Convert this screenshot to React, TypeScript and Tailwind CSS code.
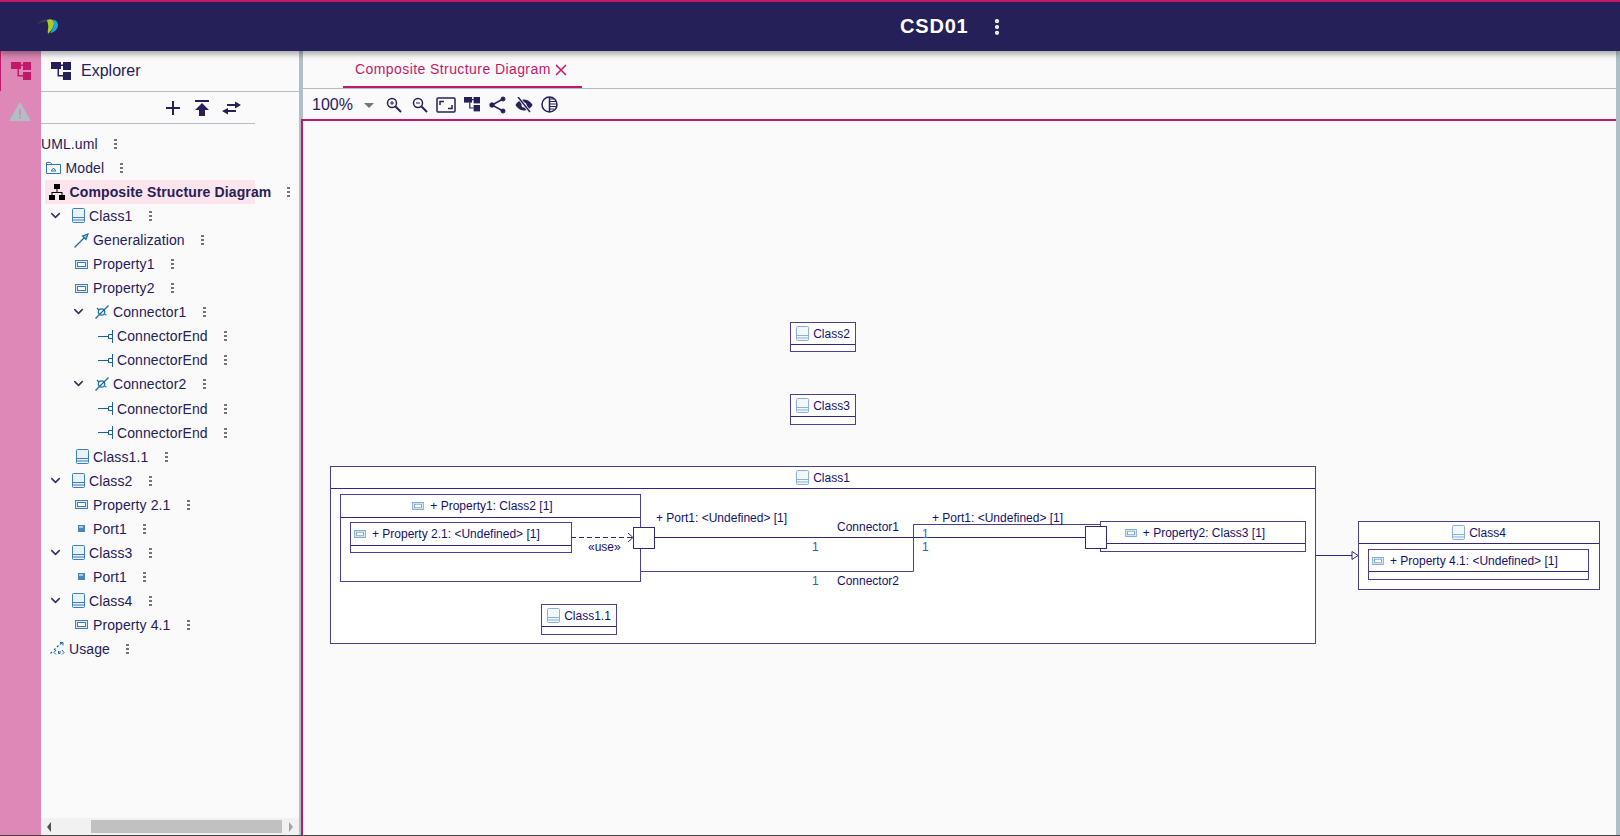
import { ChevronDown, EllipsisVertical } from "lucide-react";
import type { ReactNode } from "react";

const navy = "#262059";

function TreeIcon({ color = navy, size = 20 }: { color?: string; size?: number }) {
  return (
    <svg width={size} height={(size * 18) / 20} viewBox="0 0 20 18" fill={color}>
      <rect x="0" y="0" width="10" height="7" />
      <rect x="12" y="0" width="8" height="8" />
      <rect x="12" y="10" width="8" height="8" />
      <path d="M10 2.500h2V4h-2zM6.500 7H8v6h4v1.500H6.500z" />
    </svg>
  );
}

function ClassIcon({ faded }: { faded?: boolean }) {
  return (
    <svg width="13" height="16" viewBox="0 0 13 16" className={faded ? "opacity-60" : ""}>
      <rect x="0.500" y="0.500" width="12" height="14" rx="1" fill="#eaf2f9" stroke="#3f7fb8" />
      <path d="M1 9.500h11M1 12h11" stroke="#3f7fb8" />
    </svg>
  );
}

function PropertyIcon({ small }: { small?: boolean }) {
  return (
    <svg width={small ? 12 : 13} height={small ? 8 : 9} viewBox="0 0 13 9" className={small ? "opacity-70" : ""}>
      <rect x="0.500" y="0.500" width="12" height="8" fill="#dce9f5" stroke="#3f7fb8" />
      <rect x="2.500" y="2.500" width="8" height="4" fill="#fff" stroke="#3f7fb8" />
    </svg>
  );
}

function PortIcon() {
  return (
    <svg width="7" height="7" viewBox="0 0 7 7">
      <rect width="7" height="7" fill="#4a86ba" />
      <rect x="1" y="1" width="4" height="2" fill="#a9c8e2" />
    </svg>
  );
}

function EndIcon() {
  return (
    <svg width="15" height="13" viewBox="0 0 15 13" fill="none" stroke="#1d5f96">
      <path d="M0 6.500h10M14.500 0v13M10.500 4.500h4v4h-4z" />
    </svg>
  );
}

function ConnectorIcon() {
  return (
    <svg width="14" height="14" viewBox="0 0 14 14" fill="none" stroke="#1d6aa5" strokeWidth="1.200">
      <path d="M0.500 13.500 13.500 0.500" />
      <circle cx="6.500" cy="7" r="3.200" />
      <path d="M2 3l2 2M9.500 9.500l2 .5" />
    </svg>
  );
}

function GeneralizationIcon() {
  return (
    <svg width="15" height="15" viewBox="0 0 15 15" fill="none" stroke="#1d6aa5" strokeWidth="1.200">
      <path d="M0.500 14.500 10 5" />
      <path d="M8.500 3 14 1l-2 5.500z" fill="#9cc2e0" />
    </svg>
  );
}

function FolderIcon() {
  return (
    <svg width="15" height="12" viewBox="0 0 15 12" fill="none" stroke="#2f78b2">
      <path d="M0.500 11.500V0.500h4l1.500 2h8.500v9z" />
      <path d="M0.500 2.500H6M5 9l2.500-3L10 9z" />
    </svg>
  );
}

function DiagramIcon() {
  return (
    <svg width="16" height="16" viewBox="0 0 16 16" fill="#000">
      <rect x="5" y="0" width="6" height="5" />
      <rect x="0" y="11" width="6" height="5" />
      <rect x="10" y="11" width="6" height="5" />
      <path d="M7.500 5h1v3h5v3h-1V9h-9v2h-1V8h5z" />
    </svg>
  );
}

function UsageIcon() {
  return (
    <svg width="15" height="13" viewBox="0 0 15 13" fill="none" stroke="#1d6aa5">
      <path d="M0.500 11.500 2 10M4 8l1.500-1.500M7 5l1.500-1.500M10 2.500 12.500 0.500" strokeWidth="1.200" />
      <path d="M10 0.500h3v3" />
      <path d="M6 8l-2 2.500L6 12.500M12 8l2 2.500-2 2M8.500 9v2.500h1.500V9" />
    </svg>
  );
}

function Dots() {
  return (
    <span className="flex h-[10px] w-[3px] flex-col justify-between">
      <i className="block h-[2px] w-[3px] bg-[#757575]" />
      <i className="block h-[2px] w-[3px] bg-[#757575]" />
      <i className="block h-[2px] w-[3px] bg-[#757575]" />
    </span>
  );
}

// left = icon box, text = label start, dots = centre of the kebab, all from the panel's page x of 41
type Row = { label: string; left?: number; text: number; icon?: ReactNode; chevron?: number; dots: number; active?: boolean };

const rows: Row[] = [
  { label: "UML.uml", text: 0, dots: 116 },
  { label: "Model", left: 4, text: 24.5, icon: <FolderIcon />, dots: 122 },
  { label: "Composite Structure Diagram", left: 8, text: 28.5, icon: <DiagramIcon />, dots: 289, active: true },
  { label: "Class1", left: 29, text: 48, icon: <ClassIcon />, chevron: 7, dots: 151 },
  { label: "Generalization", left: 32, text: 52, icon: <GeneralizationIcon />, dots: 203 },
  { label: "Property1", left: 32, text: 52, icon: <PropertyIcon />, dots: 173 },
  { label: "Property2", left: 32, text: 52, icon: <PropertyIcon />, dots: 173 },
  { label: "Connector1", left: 53, text: 72, icon: <ConnectorIcon />, chevron: 30, dots: 205 },
  { label: "ConnectorEnd", left: 56, text: 76, icon: <EndIcon />, dots: 226 },
  { label: "ConnectorEnd", left: 56, text: 76, icon: <EndIcon />, dots: 226 },
  { label: "Connector2", left: 53, text: 72, icon: <ConnectorIcon />, chevron: 30, dots: 205 },
  { label: "ConnectorEnd", left: 56, text: 76, icon: <EndIcon />, dots: 226 },
  { label: "ConnectorEnd", left: 56, text: 76, icon: <EndIcon />, dots: 226 },
  { label: "Class1.1", left: 33, text: 52, icon: <ClassIcon />, dots: 167 },
  { label: "Class2", left: 29, text: 48, icon: <ClassIcon />, chevron: 7, dots: 151 },
  { label: "Property 2.1", left: 32, text: 52, icon: <PropertyIcon />, dots: 189 },
  { label: "Port1", left: 32, text: 52, icon: <PortIcon />, dots: 145 },
  { label: "Class3", left: 29, text: 48, icon: <ClassIcon />, chevron: 7, dots: 151 },
  { label: "Port1", left: 32, text: 52, icon: <PortIcon />, dots: 145 },
  { label: "Class4", left: 29, text: 48, icon: <ClassIcon />, chevron: 7, dots: 151 },
  { label: "Property 4.1", left: 32, text: 52, icon: <PropertyIcon />, dots: 189 },
  { label: "Usage", left: 8, text: 28, icon: <UsageIcon />, dots: 128 },
];

function TreeRow({ row }: { row: Row }) {
  return (
    <div className="relative h-[24.05px] w-[258px] text-[14px] leading-[24px] tracking-[0.1px] text-[#262059]">
      {row.active && <div className="absolute left-[4px] top-0 h-[24px] w-[210px] bg-[#fce4ec]" />}
      {row.chevron !== undefined && (
        <ChevronDown size={15} strokeWidth={2.5} className="absolute top-[4px] text-[#3a3163]" style={{ left: row.chevron }} />
      )}
      {row.icon && (
        <span className="absolute top-0 flex h-[24px] w-[16px] items-center justify-center" style={{ left: row.left }}>
          {row.icon}
        </span>
      )}
      <span className={`absolute top-0 whitespace-nowrap ${row.active ? "font-bold tracking-[0.13px]" : ""}`} style={{ left: row.text }}>
        {row.label}
      </span>
      <span className="absolute top-[7px]" style={{ left: row.dots - 43 }}>
        <Dots />
      </span>
    </div>
  );
}

type BoxProps = { x: number; y: number; w: number; h: number; line: number; title: string; icon: "class" | "prop"; align?: "center" | "left" | "shifted" };

function UmlBox({ x, y, w, h, line, title, icon, align = "center" }: BoxProps) {
  const alignClass = align === "left" ? "justify-start pl-[3px]" : align === "shifted" ? "justify-center pr-[16px]" : "justify-center";
  return (
    <div className="absolute border border-[#4a3f94] bg-white" style={{ left: x, top: y, width: w, height: h }}>
      <div className={`flex items-center border-b border-[#2f2680] text-[12px] text-[#14106b] ${alignClass} ${icon === "class" ? "gap-[4px]" : "gap-[6px]"}`} style={{ height: line }}>
        {icon === "class" ? <ClassIcon faded /> : <PropertyIcon small />}
        <span className="whitespace-nowrap">{title}</span>
      </div>
    </div>
  );
}

function Label({ x, y, children, color = "#14106b" }: { x: number; y: number; children: ReactNode; color?: string }) {
  return (
    <span className="absolute whitespace-nowrap text-[12px] leading-[14px]" style={{ left: x, top: y, color }}>
      {children}
    </span>
  );
}

function Canvas() {
  // diagram coordinates are page pixels, shifted by the canvas origin
  const ox = 303;
  const oy = 121;
  return (
    <div className="relative flex-1 overflow-hidden border-l-2 border-t-2 border-[#c2186b] bg-[#fafafa]">
      <UmlBox x={790 - ox} y={322 - oy} w={66} h={30} line={22} title="Class2" icon="class" />
      <UmlBox x={790 - ox} y={394 - oy} w={66} h={31} line={22} title="Class3" icon="class" />
      <UmlBox x={330 - ox} y={466 - oy} w={986} h={178} line={22} title="Class1" icon="class" />
      <UmlBox x={340 - ox} y={494 - oy} w={301} h={88} line={23} title="+ Property1: Class2 [1]" icon="prop" align="shifted" />
      <UmlBox x={350 - ox} y={522 - oy} w={222} h={31} line={23} title="+ Property 2.1: <Undefined> [1]" icon="prop" align="left" />
      <UmlBox x={541 - ox} y={604 - oy} w={76} h={31} line={22} title="Class1.1" icon="class" />
      <UmlBox x={1100 - ox} y={521 - oy} w={206} h={31} line={22} title="+ Property2: Class3 [1]" icon="prop" align="shifted" />
      <UmlBox x={1358 - ox} y={521 - oy} w={242} h={69} line={22} title="Class4" icon="class" />
      <UmlBox x={1368 - ox} y={549 - oy} w={221} h={31} line={22} title="+ Property 4.1: <Undefined> [1]" icon="prop" align="left" />

      <svg className="absolute left-0 top-0" width="1320" height="720" viewBox={`${ox} ${oy} 1320 720`} fill="none" stroke="#2f2680">
        <path d="M654.500 537.500H1086" />
        <path d="M640 571.500H913.500V524.500H1100.500" stroke="#4a3f94" />
        <path d="M571 537.500H633" strokeDasharray="5 3" />
        <path d="M628 533l5 4.500-5 4.500" />
        <path d="M1316 555.500H1352" />
        <path d="M1352 551.500l6 4-6 4z" fill="#fff" />
      </svg>

      <div className="absolute h-[22px] w-[22px] border border-[#2f2680] bg-white" style={{ left: 633 - ox, top: 527 - oy }} />
      <div className="absolute h-[23px] w-[22px] border border-[#2f2680] bg-white" style={{ left: 1085 - ox, top: 526 - oy }} />

      <Label x={656 - ox} y={511 - oy}>+ Port1: &lt;Undefined&gt; [1]</Label>
      <Label x={932 - ox} y={511 - oy}>+ Port1: &lt;Undefined&gt; [1]</Label>
      <Label x={837 - ox} y={520 - oy}>Connector1</Label>
      <Label x={837 - ox} y={574 - oy}>Connector2</Label>
      <Label x={812 - ox} y={540 - oy} color="#1d6aa5">1</Label>
      <Label x={812 - ox} y={574 - oy} color="#1d6aa5">1</Label>
      <Label x={922 - ox} y={527 - oy} color="#1d6aa5">1</Label>
      <Label x={922 - ox} y={540 - oy} color="#1d6aa5">1</Label>
      <Label x={588 - ox} y={540 - oy}>«use»</Label>
    </div>
  );
}

function ToolIcon({ children }: { children: ReactNode }) {
  return <span className="flex w-[26px] shrink-0 items-center justify-center">{children}</span>;
}

export default function App() {
  return (
    <div className="flex h-[836px] w-[1620px] flex-col overflow-hidden border-b border-[#444] bg-[#fafafa] font-['Liberation_Sans',Arial,sans-serif]">
      <header className="relative z-10 flex h-[51px] shrink-0 items-center border-t-2 border-[#c2186b] bg-[#262059] shadow-[0_3px_6px_rgba(0,0,0,0.35)]">
        <svg width="22" height="18" viewBox="0 0 22 18" className="ml-[37px]">
          <path d="M0 7C2 3 6 1 11 1.500L11 4C7 3 3 4 0 7z" fill="#3d3d4d" />
          <path d="M10 2c4-2 7 0 7 3 0 4-3 8-6 11-1-3 1-7 0-10z" fill="#a7cc2a" />
          <path d="M16 1.500c3 .5 5 2.500 5 5.500 0 4-4 8-8 8 3-4 5-9 3-13.500z" fill="#22a3d8" />
        </svg>
        <div className="absolute left-[900px] top-[12px] text-[20px] font-bold leading-[24px] tracking-[0.8px] text-white">CSD01</div>
        <EllipsisVertical size={20} strokeWidth={3} className="absolute left-[987px] top-[15px] text-white" />
      </header>

      <div className="flex min-h-0 flex-1">
        <aside className="flex w-[41px] shrink-0 flex-col bg-[#dd88b6]">
          <div className="flex h-[40px] items-center justify-center border-l border-[#c2186b]">
            <TreeIcon color="#c2186b" />
          </div>
          <svg width="22" height="20" viewBox="0 0 22 20" className="ml-[9px] mt-[11px]">
            <path d="M11 0 22 19H0z" fill="#b0bec5" />
            <path d="M10 7h2v6h-2zM10 14.500h2v2h-2z" fill="#dd88b6" />
          </svg>
        </aside>

        <section className="relative flex w-[258px] shrink-0 flex-col">
          <div className="flex h-[41px] shrink-0 items-center gap-[10px] border-b border-[#b0bec5] pl-[10px] text-[16px] text-[#262059]">
            <TreeIcon />
            <span>Explorer</span>
          </div>
          <div className="flex h-[32px] w-[214px] shrink-0 items-center border-b border-[#b0bec5] pt-[1px] pl-[124px]">
            <svg width="16" height="16" viewBox="0 0 16 16" fill={navy}><path d="M7 1h2v6h6v2H9v6H7V9H1V7h6z" /></svg>
            <svg width="16" height="18" viewBox="0 0 16 18" fill={navy} className="ml-[13px]"><path d="M1 1h14v2H1zM8 4l7 7h-4v6H5v-6H1z" /></svg>
            <svg width="19" height="16" viewBox="0 0 19 16" fill={navy} className="ml-[12px]"><path d="M6 8v2h8v2H6v2.500L0 11zM13 1.500l6 3.500-6 3.500V6H5V4h8z" /></svg>
          </div>
          <div className="flex-1 pt-[8px]">
            {rows.map((row, i) => (
              <TreeRow key={i} row={row} />
            ))}
          </div>
          <div className="flex h-[17px] shrink-0 items-center bg-[#f1f1f1] pl-[6px] pr-[6px]">
            <span className="h-0 w-0 border-y-[5px] border-r-[4px] border-y-transparent border-r-[#505050]" />
            <span className="ml-[40px] h-[13px] w-[191px] bg-[#c1c1c1]" />
            <span className="ml-[7px] h-0 w-0 border-y-[5px] border-l-[4px] border-y-transparent border-l-[#a3a3a3]" />
          </div>
        </section>

        <div className="w-[2px] shrink-0 bg-[#b0bec5]" />

        <main className="flex min-w-0 flex-1 flex-col border-r-4 border-[#b0bec5]">
          <div className="flex h-[38px] shrink-0 border-b border-[#b0bec5] border-l-2 border-l-[#b0bec5] pl-[40px]">
            <div className="flex h-[37px] items-center gap-[4px] border-b-2 border-[#c2186b] pl-[12px] pr-[15px] pt-[2px] text-[14px] tracking-[0.42px] text-[#c2186b]">
              <span>Composite Structure Diagram</span>
              <svg width="12" height="12" viewBox="0 0 12 12" stroke="#c2186b" strokeWidth="1.500"><path d="M1 1l10 10M11 1 1 11" /></svg>
            </div>
          </div>
          <div className="flex h-[30px] shrink-0 items-center border-l-2 border-l-[#b0bec5] pl-[9px] pt-[1px] text-[#262059]">
            <span className="text-[16px]">100%</span>
            <span className="ml-[11px] mr-[7px] mt-[2px] h-0 w-0 border-x-[5px] border-t-[5px] border-x-transparent border-t-[#757575]" />
            <ToolIcon>
              <svg width="18" height="18" viewBox="0 0 18 18" fill="none" stroke={navy} strokeWidth="1.500">
                <circle cx="7" cy="7" r="4.500" /><path d="M10.500 10.500 16 16" strokeWidth="2" /><path d="M5 7h4M7 5v4" strokeWidth="1" />
              </svg>
            </ToolIcon>
            <ToolIcon>
              <svg width="18" height="18" viewBox="0 0 18 18" fill="none" stroke={navy} strokeWidth="1.500">
                <circle cx="7" cy="7" r="4.500" /><path d="M10.500 10.500 16 16" strokeWidth="2" /><path d="M5 7h4" strokeWidth="1" />
              </svg>
            </ToolIcon>
            <ToolIcon>
              <svg width="20" height="16" viewBox="0 0 20 16" fill="none" stroke={navy} strokeWidth="1.500">
                <rect x="1" y="1" width="18" height="14" rx="1" /><path d="M4 8V4.500h4M16 8v3.500h-4" />
              </svg>
            </ToolIcon>
            <ToolIcon>
              <TreeIcon size={16} />
            </ToolIcon>
            <ToolIcon>
              <svg width="17" height="18" viewBox="0 0 17 18" fill={navy} stroke={navy}>
                <circle cx="14" cy="3" r="2" /><circle cx="3" cy="9" r="2.200" /><circle cx="14" cy="15" r="2" /><path d="M14 3 3 9l11 6" fill="none" strokeWidth="1.500" />
              </svg>
            </ToolIcon>
            <ToolIcon>
              <svg width="18" height="16" viewBox="0 0 18 16" fill={navy}>
                <path d="M9 2.500C4.500 2.500 1.500 6 .5 8c1 2 4 5.500 8.500 5.500S16.500 10 17.500 8C16.500 6 13.500 2.500 9 2.500z" />
                <circle cx="9" cy="8" r="2.500" fill="#fafafa" />
                <path d="M3 0l12 15" stroke="#fafafa" strokeWidth="3" /><path d="M3 0l12 15" stroke={navy} strokeWidth="1.500" />
              </svg>
            </ToolIcon>
            <ToolIcon>
              <svg width="17" height="17" viewBox="0 0 17 17" fill="none" stroke={navy} strokeWidth="1.500">
                <circle cx="8.500" cy="8.500" r="7.500" />
                <path d="M8.500 1v15" /><path d="M9 3h4M9 5.500h6M9 8h7M9 10.500h6M9 13h4" strokeWidth="1.200" />
              </svg>
            </ToolIcon>
          </div>
          <Canvas />
        </main>
      </div>
    </div>
  );
}
